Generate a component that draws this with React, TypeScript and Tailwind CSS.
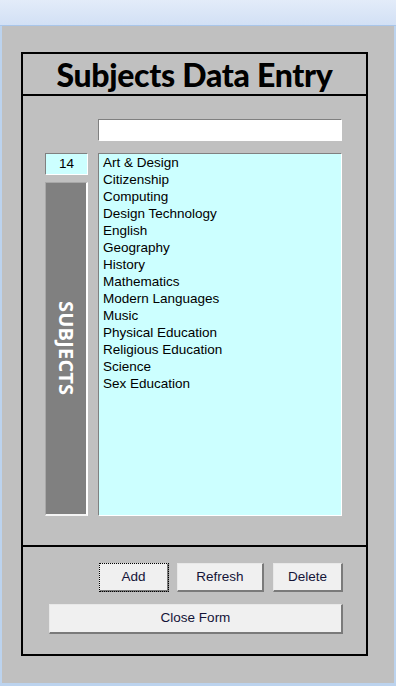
import React from 'react';

const subjects = [
  'Art & Design',
  'Citizenship',
  'Computing',
  'Design Technology',
  'English',
  'Geography',
  'History',
  'Mathematics',
  'Modern Languages',
  'Music',
  'Physical Education',
  'Religious Education',
  'Science',
  'Sex Education',
];

const sunken =
  'border-t border-l border-t-[#808080] border-l-[#808080] border-r border-b border-r-white border-b-white';

function FormButton({ label, className = '', focused = false }: { label: string; className?: string; focused?: boolean }) {
  return (
    <button
      className={`h-[29px] bg-[#f0f0f0] text-[13.5px] text-[#141438] border-t border-l border-t-[#e8e8e8] border-l-[#e8e8e8] border-r-2 border-b-2 border-r-[#7a7a7a] border-b-[#7a7a7a] ${
        focused ? 'outline outline-1 outline-dotted outline-black -outline-offset-1' : ''
      } ${className}`}
    >
      {label}
    </button>
  );
}

export default function App() {
  return (
    <div
      className="w-[396px] h-[686px] flex flex-col bg-[#bcd3ee] overflow-hidden"
      style={{ fontFamily: '"Liberation Sans", Arial, sans-serif' }}
    >
      {/* title bar */}
      <div className="h-[26px] shrink-0 bg-gradient-to-b from-[#e3ecf9] to-[#d2e0f5] border-b border-b-[#a9c6ea]" />

      {/* form body */}
      <div className="flex-1 mx-[2px] mb-[3px] bg-[#c0c0c0] pt-[26px] pl-[19px]">
        <div className="w-[347px] h-[604px] border-2 border-black flex flex-col">
          {/* header */}
          <div className="h-[42px] shrink-0 border-b-2 border-black flex items-center justify-center">
            <h1
              className="text-[32px] font-black leading-none text-black tracking-[-0.3px] pt-[2px]"
              style={{ fontFamily: 'Lato, "Open Sans", sans-serif' }}
            >
              Subjects Data Entry
            </h1>
          </div>

          {/* detail */}
          <div className="h-[451px] shrink-0 border-b-2 border-black pt-[23px] pl-[22px]">
            <div className="pl-[53px]">
              <input className={`block w-[244px] h-[22px] bg-white outline-none ${sunken}`} />
            </div>
            <div className="flex gap-[10px] mt-[12px]">
              <div className="w-[43px] flex flex-col gap-[7px]">
                <div className={`h-[22px] bg-[#ccffff] flex items-center justify-center text-[13.5px] text-black ${sunken}`}>
                  14
                </div>
                <div className="h-[334px] bg-[#808080] border-l border-t border-l-[#a8a8a8] border-t-[#a8a8a8] border-r-2 border-b-2 border-r-white border-b-[#f4f4f4] flex items-center justify-center">
                  <span
                    className="text-white font-bold text-[20px] leading-none tracking-[0.2px] [writing-mode:vertical-rl]"
                    style={{ fontFamily: '"Open Sans", sans-serif' }}
                  >
                    SUBJECTS
                  </span>
                </div>
              </div>
              <ul className={`w-[244px] h-[363px] bg-[#ccffff] pt-[0px] pl-[4px] ${sunken}`}>
                {subjects.map((s) => (
                  <li key={s} className="h-[17px] leading-[17px] text-[13.5px] text-black">
                    {s}
                  </li>
                ))}
              </ul>
            </div>
          </div>

          {/* footer */}
          <div className="flex-1 pt-[16px] pr-[23px] flex flex-col items-end gap-[12px]">
            <div className="flex">
              <FormButton label="Add" className="w-[70px]" focused />
              <FormButton label="Refresh" className="w-[87px] ml-[8px]" />
              <FormButton label="Delete" className="w-[70px] ml-[9px]" />
            </div>
            <FormButton label="Close Form" className="w-[294px] !h-[30px]" />
          </div>
        </div>
      </div>
    </div>
  );
}
